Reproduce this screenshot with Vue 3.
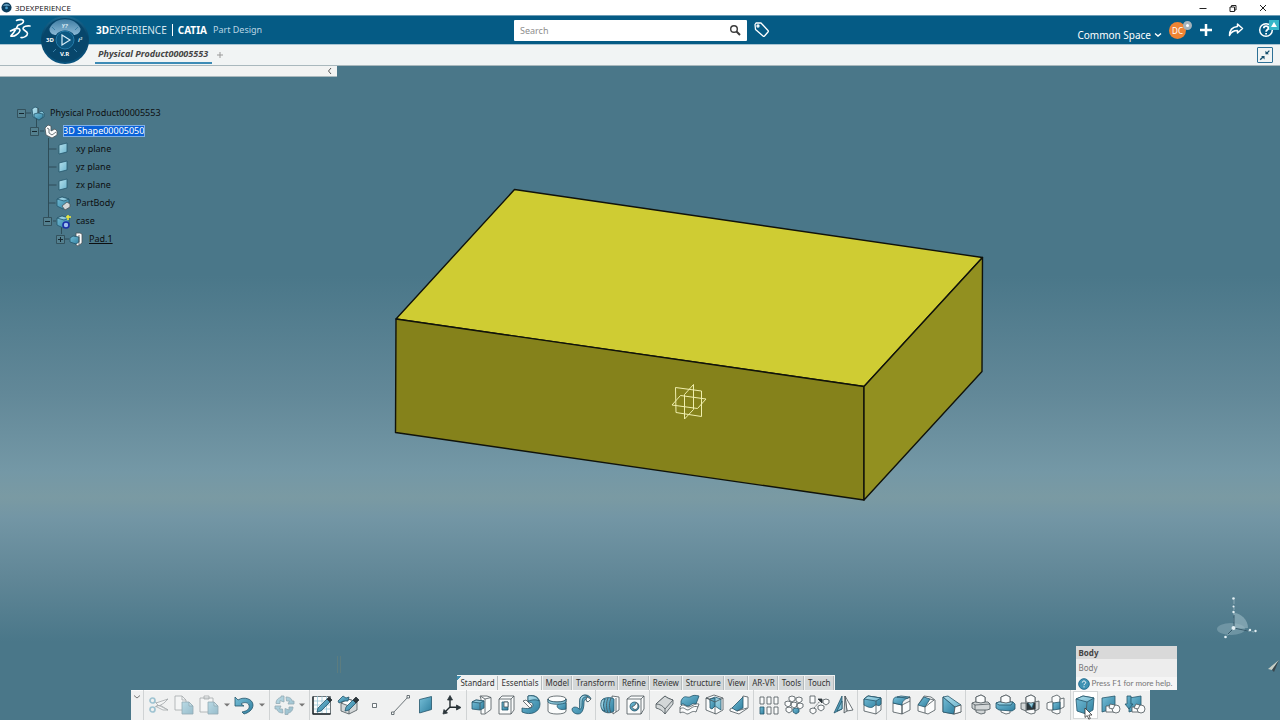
<script setup>
import { ref } from 'vue'

const query = ref('')

// Shape lists for the action bar icons: [style classes, path data]
const icons = {
  cut: [['n grey', 'M21 8L8 16M21 19L8 11'], ['ring', 'M8 9.500a2.500 2.500 0 1 1-5 0a2.500 2.500 0 1 1 5 0M8 18.500a2.500 2.500 0 1 1-5 0a2.500 2.500 0 1 1 5 0'], ['w', 'M9 12l12-4-4 4-5 3zM9 15.500l3-1 9 4.500h-5z']],
  copy: [['w', 'M3 5h7l4 4v10H3z'], ['n', 'M10 5v4h4'], ['b', 'M10 11h7l4 4v8H10z'], ['l', 'M17 11v4h4z']],
  paste: [['w', 'M3 7h13v14H3zM7 5h5v3H7z'], ['b', 'M11 11h6l4 4v8H11z'], ['l', 'M17 11v4h4z']],
  undo: [['b', 'M3 6l3 3c6-4 15-1 15 5c0 5-5 8-9 9l-2-2c5-1 8-3 7-7c-1-3-6-3-8-1l3 2H3z']],
  update: [['b', 'M4 12.500c0-4 3-6 5-6V5h3v6l-4-1.500v3zM14 6c4 0 6 2 6 4h2v3h-6l1.500-3h-3zM21 16c0 4-3 6-5 6v1.500h-3v-6l4 1.500v-3zM11 22c-4 0-6-2-6-4H3v-3h6l-1.500 3h3z']],
  sketch: [['w', 'M3 5.500h17.500v17.500H3z'], ['n blue', 'M3 10h17M3 14h17M3 18h17M7.500 5v18M12 5v18M16.500 5v18'], ['n bold', 'M3 5.500v17.500h17.500'], ['b', 'M7 21l1-4 9-9 3 3-9 9z'], ['k', 'M17 8l2-2 3 3-2 2z']],
  sketch3d: [['g', 'M5 12l7-4 9 3v8l-8 4-8-3z'], ['w', 'M5 12l7-4 9 3-8 4z'], ['n', 'M13 15v8'], ['b', 'M2 10l5-5 3 2 3-1-1 4H8l-5 2z'], ['b', 'M9 20l1-4 7-7 3 3-7 7z'], ['k', 'M17 9l3-3 3 3-3 3z']],
  point: [['w', 'M10.500 12.500h4v4h-4z']],
  line: [['n', 'M5 22L20 6'], ['w', 'M3.500 21h2.500v2.500H3.500zM19 4.500h2.500v2.500H19z']],
  plane: [['b', 'M5.500 8.500l12-3v13l-12 3.500z']],
  axis: [['n bold', 'M10 16V8M10 16l9 .5M10 16l-5 5'], ['k', 'M10 4.500l2.500 4.500h-5zM21 16.500l-4.500-2.500v5zM3 23l1-4.500 3.500 3.500z']],
  pad: [['w', 'M11 5h7l4 1.500v12l-6 4.500h-4V8z'], ['n', 'M16 8v14.500M16 8l6-1.500M12 5.500l4 2.500'], ['b', 'M3 11l4-2 8 1v7l-4 2-8-1z'], ['l', 'M3 11l4-2 8 1-4 2z'], ['n', 'M11 12v7']],
  pocket: [['w', 'M5 8l3-3h12v14l-3 4H5z'], ['n', 'M5 8h12v15M17 8l3-3'], ['b', 'M8 11h6v8H8z'], ['w', 'M10 11h4v5h-4z']],
  shaft: [['b', 'M9 5c7-2 12 2 12 8c0 8-9 12-18 8l0-4c5 1 11 1 11-3c0-2-2-3-5-3z'], ['l', 'M9 5c6-1 10 1 11 5c-3-2-7-1-11 0z'], ['w', 'M4 10l3-1 6 6-2 2z']],
  groove: [['w', 'M4 8v12c0 4 18 4 18 0V8z'], ['w', 'M4 8c0-4 18-4 18 0s-18 4-18 0'], ['b', 'M13 15c1-3 5-4 9-3v6c-3 1-8 1-9-3z'], ['l', 'M4 8c0 4 18 4 18 0v3c-2 3-16 3-18 0z']],
  rib: [['b', 'M3 18c1-3 6-2 7 0c2-3-1-11 3-13c3-2 8-1 9 3l-4 3c0-3-3-3-3 0c0 5-1 12-6 12c-3 0-6-2-6-5z'], ['l', 'M10 18c2-3-1-11 3-13c3-2 6 0 6 1c-6-1-6 3-6 7c0 5-2 6-3 5z'], ['w', 'M18 6l4 2-3 3-2-2z']],
  multi: [['w', 'M14 5l7 1v13l-6 4z'], ['n', 'M18 7v14'], ['b', 'M4 9c3-3 9-3 12-1v12c-4 3-9 2-12-1z'], ['n', 'M7 8c-2 4-2 9 0 13M10 7c-2 5-2 10 0 15M13 7c-2 5-2 10 0 15'], ['l', 'M4 9c1-1 2-1 3-1c-2 4-2 8 0 12c-5-1-5-8-3-11z']],
  hole: [['w', 'M4 8l4-3h13v13l-3 5H4z'], ['n', 'M4 8h14v15M18 8l3-3'], ['b', 'M16 15.500a4.500 4.500 0 1 1-9 0a4.500 4.500 0 1 1 9 0'], ['w', 'M13 11.500c2 1 3 5 0 7c-3 0-4-2-4-3c2 0 4-2 4-4z']],
  thick: [['g', 'M4 13l9-8c2 2 5 3 8 4v4l-8 10c-2-3-5-5-9-6z'], ['g', 'M4 13l9-8c2 2 5 3 8 4l-8 9c-2-3-5-5-9-5z'], ['n', 'M13 18v5']],
  surf: [['w', 'M3 16c3-4 5-1 8 0c4 0 6-4 11-3l-3 8c-4-2-6 2-9 2c-2-1-4-3-7-1z'], ['b', 'M4 10c3-7 6-3 9-4c3-2 5-2 9-1l-3 8c-4-2-5 2-8 2c-3 0-5-4-7-1z'], ['n', 'M3 18c4-3 5 1 8 1c3-1 5-5 10-3']],
  shell: [['w', 'M4 7l8-3 9 3v12l-7 4-10-4z'], ['l', 'M8 8l5-2 6 2v11l-6-4-4 2z'], ['b', 'M8 8l5-1v8l-3 3-2-1z'], ['n', 'M4 7l9 4 8-4M13 16v7M4 7l4 1']],
  stiff: [['w', 'M3 18l11-5 2-8 5 1v11l-9 6-9-3z'], ['b', 'M5 17L16 6v11l-6 3z'], ['n', 'M10 20l10-3']],
  pattern: [['w', 'M4 6h4v7H4zM11 6h4v7h-4zM18 6h4v7h-4zM11 16h4v7h-4zM18 16h4v7h-4z'], ['b', 'M4 16h4v7H4z']],
  circ: [['w', 'M8 6l3-1 3 1v3l-3 2-3-2zM15 7l3-1 3 1v3l-3 2-3-2zM4 11l3-1 3 1v3l-3 2-3-2zM16 13l3-1 3 1v3l-3 2-3-2zM10 12l3-1 3 1v3l-3 2-3-2zM5 17l3-1 3 1v3l-3 2-3-2z'], ['b', 'M12 18l3-1 3 1v3l-3 2-3-2z']],
  userpat: [['w', 'M4 5h5v7H4zM4 18l3-1 3 1v3l-3 2-3-2zM17 9l3-1 3 1v3l-3 2-3-2zM12 15l3-1 3 1v3l-3 2-3-2z'], ['n dash', 'M8 17l7-8'], ['k', 'M12 8h4v4z']],
  mirror: [['b', 'M3 22l8-17v13z'], ['l', 'M6 20l5-10v8z'], ['w', 'M14 5l8 14-6 1z'], ['g', 'M14 5l2 15-3 2z']],
  split: [['w', 'M4 8l4-3 13 2v12l-5 4-12-3z'], ['b', 'M4 8l4-3 13 2v6c-3 4-4-1-7 2s-6 1-10-1z'], ['l', 'M4 8l4-3 13 2-5 3z'], ['n', 'M16 10v13']],
  fillet: [['w', 'M4 12l9 2v9l-9-2zM13 14l8-4v9l-8 4z'], ['b', 'M4 12c0-4 1-6 4-6l11 1c-3 1-6 3-6 7z'], ['l', 'M8 6l4-1 9 1-2 1z'], ['n', 'M19 7l2-1v4']],
  chamfer: [['w', 'M4 14l6-9 7 1 4 3v10l-7 4-10-3z'], ['b', 'M4 14l6-8 6 2-5 8z'], ['n', 'M11 16v6M16 8l4 1M11 16l9-7']],
  draft: [['w', 'M4 6l15 7 3 8-7 2-11-2z'], ['b', 'M4 6l12 10-1 7-11-2z'], ['l', 'M4 6l5-1 13 9-6 2z'], ['w', 'M16 16l6-2v7l-7 2z']],
  assemble: [['g', 'M8 6l5-2 4 2v16l-4 1-5-2z'], ['g', 'M4 12l3-1h13l2 2v5l-3 1H7l-3-2z'], ['w', 'M8 6l5-2 4 2v5l-4 1-5-1z'], ['n', 'M4 12l3 2 15-1M7 14v5']],
  add: [['w', 'M8 6l5-2 4 2v16l-4 1-5-2z'], ['b', 'M3 12l3-1h14l2 2v5l-3 2-13-1-3-2z'], ['l', 'M3 12l3-1h14l-2 3H6z'], ['w', 'M8 6l5-2 4 2v5l-4 1-5-1z']],
  remove: [['w', 'M8 6l5-2 4 2v16l-4 1-5-2z'], ['g', 'M3 12h5v8l-5-2zM17 11l4-1v8l-4 2z'], ['k', 'M9 12h8v6l-8 1z'], ['l', 'M10 12l6-1-2 6z'], ['w', 'M8 6l5-2 4 2v5l-4 1-5-1z']],
  inter: [['w', 'M9 6l5-2 3 2v16l-3 1-5-2z'], ['w', 'M4 12l3-1h3v8H6l-2-1zM17 8l4-1v9l-4 2z'], ['b', 'M10 12l7-1v7l-7 1z']],
  body: [['b', 'M3 8l7-3 11 2-1 12-7 4-9-3z'], ['l', 'M3 8l7-3 11 2-7 4z'], ['n', 'M14 11l-1 12']],
  geoset: [['b', 'M4 7l13-2v12L4 21z'], ['w', 'M8 15h8v6H8z'], ['w', 'M22 18a4 4 0 1 1-8 0a4 4 0 1 1 8 0'], ['w', 'M12 13l5 1-2 4-4-1z']],
  ordered: [['b', 'M6 7l12-2v12L6 21z'], ['b', 'M4 5h4v8h2l-4 5-4-5h2z'], ['w', 'M9 16h7v5H9z'], ['w', 'M22 18a4 4 0 1 1-8 0a4 4 0 1 1 8 0'], ['w', 'M13 13l4 1-2 4-4-1z']],
}

const edit = [
  { icon: 'cut', label: 'Cut', off: true },
  { icon: 'copy', label: 'Copy', off: true },
  { icon: 'paste', label: 'Paste', off: true, menu: true },
  { icon: 'undo', label: 'Undo', menu: true },
]
const groups = [
  { cls: 'first', tools: edit },
  { cls: '', tools: [{ icon: 'update', label: 'Update', off: true, menu: true }] },
  { cls: 'wide', tools: ['sketch', 'sketch3d', 'point', 'line', 'plane', 'axis'].map(tool) },
  { cls: 'snug', tools: ['pad', 'pocket', 'shaft', 'groove', 'rib'].map(tool) },
  { cls: 'snug', tools: ['multi', 'hole'].map(tool) },
  { cls: 'snug', tools: ['thick', 'surf', 'shell', 'stiff'].map(tool) },
  { cls: 'snug', tools: ['pattern', 'circ', 'userpat', 'mirror'].map(tool) },
  { cls: 'snug', tools: ['split'].map(tool) },
  { cls: 'snug', tools: ['fillet', 'chamfer', 'draft'].map(tool) },
  { cls: '', tools: ['assemble', 'add', 'remove', 'inter'].map(tool) },
  { cls: '', tools: ['body', 'geoset', 'ordered'].map(tool) },
]
function tool(name) {
  return { icon: name, label: name, tip: name === 'body' }
}

const sections = ['Standard', 'Essentials', 'Model', 'Transform', 'Refine', 'Review', 'Structure', 'View', 'AR-VR', 'Tools', 'Touch']

const tree = [
  { text: 'Physical Product00005553', level: 0, box: '-', icon: 'product' },
  { text: '3D Shape00005050', level: 1, box: '-', icon: 'shape', selected: true },
  { text: 'xy plane', level: 2, icon: 'plane' },
  { text: 'yz plane', level: 2, icon: 'plane' },
  { text: 'zx plane', level: 2, icon: 'plane' },
  { text: 'PartBody', level: 2, icon: 'part' },
  { text: 'case', level: 2, box: '-', icon: 'case' },
  { text: 'Pad.1', level: 3, box: '+', icon: 'pad', underlined: true },
]
const treeIcons = {
  product: [['l', 'M2 3l3-2 3 1v5l4-2 2 2v4l-5 3-6-3z'], ['b', 'M4 8l4-1 5 1v3l-4 3-5-3z'], ['n', 'M8 7V2']],
  shape: [['w', 'M2 4l3-3 3 1v5l4-2 2 2v4l-5 3-6-3z'], ['n', 'M4 4l2 1v4l3 2 4-3']],
  plane: [['l', 'M3 3l8-2v9l-8 2z']],
  part: [['b', 'M1 3l5-2 7 2v7l-6 3-6-3z'], ['l', 'M1 3l5-2 7 2-5 2z'], ['g', 'M6 10l5-4 3 2v3l-5 3z']],
  case: [['b', 'M1 4l5-2 7 2v7l-6 3-6-3z'], ['l', 'M1 4l5-2 7 2-5 2z'], ['gear', 'M13 11a3 3 0 1 1-6 0a3 3 0 1 1 6 0'], ['star', 'M12 1v5M10 3h5']],
  pad: [['w', 'M7 1h4l2 1v9l-4 3-2-1V4z'], ['b', 'M1 6l3-2 6 1v5l-3 2-6-2z'], ['n', 'M10 3v10']],
}
</script>

<template>
  <div class="app">
    <svg class="defs" width="0" height="0" aria-hidden="true">
      <defs>
        <linearGradient id="steel" x1="0" y1="0" x2="1" y2="1"><stop offset="0" stop-color="#77bfd8" /><stop offset="1" stop-color="#2f7f9f" /></linearGradient>
        <linearGradient id="ice" x1="0" y1="0" x2="1" y2="1"><stop offset="0" stop-color="#b4e0ec" /><stop offset="1" stop-color="#6eb5ce" /></linearGradient>
        <linearGradient id="ring" x1="0" y1="0" x2="0" y2="1"><stop offset="0" stop-color="#1a6990" /><stop offset="0.450" stop-color="#064468" /><stop offset="1" stop-color="#0a5580" /></linearGradient>
        <linearGradient id="gloss" x1="0" y1="0" x2="0" y2="1"><stop offset="0" stop-color="#3f7da3" /><stop offset="1" stop-color="#8bb9d6" /></linearGradient>
      </defs>
    </svg>
    <div class="titlebar">
      <svg class="app-icon" viewBox="0 0 12 12"><circle cx="6" cy="6" r="5.500" fill="#0c3d5c" /><path d="M2 4a4.500 3.500 0 0 1 8 0z" fill="#6aa5c8" /><circle cx="6" cy="6.500" r="1.500" fill="#4aa0d0" /></svg>
      <span class="app-name">3DEXPERIENCE</span>
      <button type="button" aria-label="Minimize"><svg viewBox="0 0 10 10"><path d="M1.500 5.500h7" /></svg></button>
      <button type="button" aria-label="Restore"><svg viewBox="0 0 10 10"><path d="M2 4h4.500v4.500H2zM3.500 4V2.500H8V7H6.500" /></svg></button>
      <button type="button" aria-label="Close"><svg viewBox="0 0 10 10"><path d="M2 2l6 6M8 2L2 8" /></svg></button>
    </div>

    <header class="header">
      <div class="brand">
        <svg class="ds-logo" viewBox="0 0 24 24"><path d="M8.500 2.500c3-1.500 7-1 7 .8c0 2-3 3.200-5.500 3.900M10 7.200c-2 4-4 8-7 10.500c-1 1 3 .8 5-.7c3-2 5-4.500 3.500-6c-1.500-1.300-5.500 0-9 2M22 8c-3-.5-7 .5-7 2.500c0 2 4.500 2.500 4.500 5c0 2.500-4 4.500-6.500 4" /></svg>
        <p class="brand-text"><b>3D</b>EXPERIENCE <i class="bar"></i> <b>CATIA</b> <small>Part Design</small></p>
      </div>
      <div class="search">
        <form class="search-box" @submit.prevent>
          <input v-model="query" type="text" placeholder="Search" aria-label="Search" />
          <button type="submit" aria-label="Run search"><svg viewBox="0 0 12 12"><circle cx="5" cy="5" r="3.300" /><path d="M7.500 7.500L11 11" stroke-width="2" /></svg></button>
        </form>
      </div>
      <div class="actions">
        <button class="tag" type="button" aria-label="Tags"><svg viewBox="0 0 16 16"><path d="M1 2.500L2 1h5l7 7.500c.5.500.5 1 0 1.500l-3.500 4c-.5.500-1 .5-1.500 0L1.500 7.500z" /><circle cx="4" cy="4" r="1" /></svg></button>
        <button class="space" type="button">Common Space <svg viewBox="0 0 8 6"><path d="M1 1.500l3 2.500 3-2.500" /></svg></button>
        <button class="avatar" type="button">DC<span class="status"></span></button>
        <button class="act" type="button" aria-label="Add"><svg viewBox="0 0 16 16"><path d="M8 2v12M2 8h12" stroke-width="2.500" /></svg></button>
        <button class="act" type="button" aria-label="Share"><svg viewBox="0 0 16 16"><path d="M9.500 2l5 4.500-5 4.500V8.500C5.500 8.500 3 10 1.500 13.500C1.500 8 4.500 5 9.500 4.500z" /></svg></button>
        <button class="act" type="button" aria-label="Help"><svg viewBox="0 0 16 16"><circle cx="8" cy="8" r="6.300" /><path d="M5.800 6.200c0-3 4.600-2.600 4.600 0c0 1.600-2.300 1.600-2.300 3.500M8.100 11v1.500" stroke-width="1.800" /></svg><span class="notice"></span></button>
      </div>
      <svg class="compass" viewBox="0 0 50 50">
        <circle cx="25" cy="25" r="24" fill="url(#ring)" />
        <circle cx="25" cy="25" r="22" fill="#07466b" />
        <path d="M9.500 13.500C15 1 35 1 40.500 13.500C41 18 36 20 34 20C31 14 19 14 16 20C13 20 9 18 9.500 13.500z" fill="url(#gloss)" />
        <circle cx="25" cy="25" r="9" fill="#0c5781" stroke="#257caa" />
        <path d="M22 20l8 5-8 5z" fill="none" stroke="#d9edf8" stroke-width="1.200" />
        <path d="M16 34l-3 3M34 34l3 3M15 15l-3-3M35 15l3-3" stroke="#3b81a8" />
        <text x="6" y="27">3D</text><text x="20" y="41">V.R</text><text x="21.500" y="13" class="soft">Y?</text><text x="38" y="27" class="soft">i²</text>
      </svg>
    </header>

    <nav class="docs">
      <a class="doc" href="#product">Physical Product00005553</a>
      <button class="new-doc" type="button" aria-label="New tab"><svg viewBox="0 0 8 8"><path d="M4 1v6M1 4h6" /></svg></button>
      <button class="shrink" type="button" aria-label="Exit full view"><svg viewBox="0 0 16 16"><path d="M2.500 13.500l3.500-3.500M13 3L9.500 6.500" stroke-width="1.500" /><path d="M3.500 9h4v4zM8.500 3v4h4z" fill="#16506e" stroke="none" /></svg></button>
    </nav>

    <main class="viewport">
      <svg class="scene" viewBox="0 66 1280 654" preserveAspectRatio="xMidYMid meet">
        <g stroke="#10120a" stroke-width="1.400" stroke-linejoin="round">
          <path d="M514.500 189.500L982.500 257.500L864 386.500L396 319z" fill="#cfcc33" />
          <path d="M396 319L864 386.500V500L395.500 432.500z" fill="#85821b" />
          <path d="M982.500 257.500L864 386.500V500L982 371.500z" fill="#929020" />
        </g>
        <path d="M675.500 387.500l26 3.500v25.500l-25.500-4zM672 405l8.500-9.500 25.500 3.500-8.500 9.500zM693.500 384.500v25l-9 9.500v-24.500z" fill="none" stroke="#f0efae" stroke-width="1" />
        <path d="M337.500 656v17M340.500 656v17" stroke="#5c7c7f" stroke-width="1" />
      </svg>

      <div class="panel"><button type="button" aria-label="Collapse tree"><svg viewBox="0 0 6 8"><path d="M4 1L1.500 4 4 7" /></svg></button></div>

      <div class="tree">
        <svg class="links" viewBox="0 0 120 144"><path d="M26 9h5M36.500 15v12M40 27h4M48.500 34v82M48.500 45h8M48.500 63h8M48.500 81h8M48.500 99h7M53 117h3M61.500 122v8M65 135h4" /></svg>
        <div v-for="node in tree" :key="node.text" class="node" :class="'level' + node.level">
          <button v-if="node.box" class="box" type="button" :aria-label="'Toggle ' + node.text"><svg viewBox="0 0 9 9"><path d="M.5 .5h8v8h-8z" /><path :d="node.box === '+' ? 'M2 4.500h5M4.500 2v5' : 'M2 4.500h5'" stroke="#16262e" /></svg></button>
          <span v-else class="box"></span>
          <svg class="node-icon glyph" viewBox="0 0 15 15"><path v-for="(s, i) in treeIcons[node.icon]" :key="i" :class="s[0]" :d="s[1]" /></svg>
          <span class="node-text" :class="{ selected: node.selected, underlined: node.underlined }">{{ node.text }}</span>
        </div>
      </div>

      <svg class="robot" viewBox="0 0 50 50">
        <ellipse cx="21" cy="33" rx="14" ry="6" fill="#8fb0bc" opacity="0.500" />
        <path d="M24 17c7 0 14 7 14 15l-14 1z" fill="#9dbac4" opacity="0.600" />
        <path d="M24 32V3M24 32l20 4M24 32l-8 9" fill="none" stroke="#8aa9b5" stroke-width="1" stroke-dasharray="4 2" />
        <path d="M24 32V19M24 32l14 3M24 32l-6 6" stroke="#35596a" stroke-width="1" />
        <g fill="#e4f0f4"><circle cx="23.500" cy="32" r="2" /><circle cx="23.500" cy="2.500" r="1.300" /><circle cx="23.500" cy="10.500" r="1" /><circle cx="23.500" cy="16" r="1.200" /><circle cx="40" cy="34" r="1.200" /><circle cx="45.500" cy="35" r="1.200" /><circle cx="15.500" cy="41" r="1.300" /></g>
      </svg>
      <svg class="dart" viewBox="0 0 12 12"><path d="M12 0L1 9l4 1z" fill="#c9cfc6" /><path d="M12 0L5 10l2 2z" fill="#39464c" /></svg>

      <div class="dock">
        <div class="sections">
          <button v-for="(name, i) in sections" :key="name" type="button" :class="{ lit: i < 2 }">{{ name }}</button>
        </div>
        <div class="toolbar">
          <button class="fold" type="button" aria-label="Collapse action bar"><svg viewBox="0 0 8 6"><path d="M1 1.500l3 2.500 3-2.500" /></svg></button>
          <div v-for="(group, g) in groups" :key="g" class="group" :class="group.cls">
            <template v-for="t in group.tools" :key="t.icon">
              <button class="tool" :class="{ off: t.off, hot: t.tip }" type="button" :aria-label="t.label">
                <svg class="glyph" viewBox="0 0 25 28"><path v-for="(s, i) in icons[t.icon]" :key="i" :class="s[0]" :d="s[1]" /></svg>
                <svg v-if="t.tip" class="cursor" viewBox="0 0 9 13"><path d="M1 1v9.500l2.200-2 1.600 3.700 1.500-.7-1.500-3.500H8z" /></svg>
              </button>
              <button v-if="t.menu" class="menu" type="button" :aria-label="t.label + ' options'"><svg viewBox="0 0 6 4"><path d="M0 .5h6L3 3.500z" /></svg></button>
            </template>
          </div>
          <div class="tooltip" role="tooltip">
            <strong>Body</strong>
            <span class="desc">Body</span>
            <span class="help"><svg viewBox="0 0 12 12"><circle cx="6" cy="6" r="5.300" fill="#3f93b4" stroke="#226f92" /><path d="M4.300 4.600c0-2.200 3.400-2 3.400 0c0 1.200-1.700 1.200-1.700 2.600M6 8.300v1.100" fill="none" stroke="#fff" /></svg>Press F1 for more help.</span>
          </div>
        </div>
      </div>
    </main>
  </div>
</template>

<style>
html, body { margin: 0; background: #4a7789; }
</style>

<style scoped>
.app { display: flex; flex-direction: column; height: 100vh; min-height: 480px; overflow: hidden; font-family: "Noto Sans", "Open Sans", sans-serif; color: #3c3c3c; }
button { margin: 0; padding: 0; border: 0; background: none; font: inherit; color: inherit; display: flex; align-items: center; justify-content: center; cursor: pointer; }
svg { display: block; flex: none; }
p { margin: 0; }
.defs { position: absolute; }

.titlebar { flex: none; display: flex; align-items: center; height: 15px; padding: 0 2px 0 1px; background: #fff; }
.app-icon { width: 11px; height: 11px; margin-right: 3px; }
.app-name { flex: 1; font: 8px/15px "Open Sans", sans-serif; color: #111; }
.titlebar button { width: 30px; height: 15px; }
.titlebar button svg { width: 10px; height: 10px; fill: none; stroke: #222; stroke-width: 1; }

.header { position: relative; z-index: 2; flex: none; display: grid; grid-template-columns: 514fr 233fr 533fr; height: 28px; border-top: 1px solid #6d9db6; background: #055b85; color: #fff; }
.brand { display: flex; align-items: center; }
.ds-logo { width: 24px; height: 24px; margin: 0 64px 0 8px; fill: none; stroke: #fff; stroke-width: 1.6; stroke-linecap: round; }
.brand-text { display: flex; align-items: center; font-size: 10px; line-height: 16px; color: #d5e6ef; white-space: nowrap; }
.brand-text b { color: #fff; }
.brand-text small { margin-left: 6px; font-size: 9px; color: #b9d5e3; }
.bar { width: 1px; height: 12px; margin: 0 5px; background: #fff; }
.search { display: flex; align-items: center; }
.search-box { flex: 1; display: flex; height: 21px; background: #fff; border-radius: 1px; }
.search-box input { flex: 1; min-width: 0; padding: 0 6px; border: 0; outline: 0; background: none; font: 9px/21px "Noto Sans", sans-serif; color: #333; }
.search-box input::placeholder { color: #8d8d8d; opacity: 1; }
.search-box button { width: 25px; }
.search-box svg { width: 12px; height: 12px; fill: none; stroke: #3a3a3a; stroke-width: 1.4; }
.actions { display: flex; align-items: center; margin-right: -1px; }
.tag { width: 30px; margin-right: auto; }
.tag svg, .act svg { width: 16px; height: 16px; fill: none; stroke: #fff; stroke-width: 1.3; stroke-linejoin: round; }
.space { align-self: flex-end; height: 18px; font-size: 10px; gap: 3px; margin-right: 7px; white-space: nowrap; }
.space svg { width: 8px; height: 6px; fill: none; stroke: #fff; stroke-width: 1.4; }
.avatar { position: relative; width: 17px; height: 17px; margin-right: 5px; border-radius: 50%; background: #ee8434; font-size: 8px; color: #fff; }
.status { position: absolute; top: -1px; right: -6px; width: 3px; height: 3px; border: 3px solid #a5b3bb; border-radius: 50%; background: #fff; }
.act { position: relative; width: 30px; }
.act svg { stroke-width: 1.5; }
.notice { position: absolute; top: -2px; right: 2px; width: 10px; height: 10px; background: #35b6c8; }
.notice::after { content: ""; position: absolute; left: 2px; top: 2px; border: 3px solid transparent; border-top: 0; border-bottom: 5px solid #fff; }
.compass { position: absolute; left: 40px; top: -1px; width: 50px; height: 50px; }
.compass text { font: bold 6px "Noto Sans", sans-serif; fill: #fff; }
.compass .soft { fill: #d5e6ef; font-style: italic; }

.docs { flex: none; display: flex; align-items: center; height: 20px; padding: 0 7px 0 95px; border-top: 1px solid #a9c4d2; border-bottom: 1px solid #a9b8bd; background: #f1f4f4; }
.doc { align-self: stretch; box-sizing: border-box; height: 19px; padding: 0 4px 0 3px; border-bottom: 2px solid #3d8bb5; font: italic bold 9px/18px "Noto Sans", sans-serif; color: #454545; text-decoration: none; }
.new-doc { width: 16px; height: 16px; }
.new-doc svg { width: 8px; height: 8px; fill: none; stroke: #9a9a9a; }
.shrink { margin-left: auto; width: 16px; height: 16px; box-sizing: border-box; border: 1px solid #2d7095; border-radius: 1px; }
.shrink svg { width: 14px; height: 14px; fill: none; stroke: #16506e; }

.viewport { position: relative; flex: 1; min-height: 0; display: flex; flex-direction: column; align-items: flex-start; background: linear-gradient(#4a7789 0%, #4a7789 32%, #628898 50%, #7498a6 62%, #7a9aa3 66%, #7396a5 69%, #618797 78%, #4a7789 88%, #4a7789 100%); }
.scene { position: absolute; inset: 0; width: 100%; height: 100%; }
.panel { position: relative; width: 337px; height: 10px; display: flex; justify-content: flex-end; background: #f2f3f2; border-bottom: 1px solid #aab9be; }
.panel button { width: 14px; }
.panel svg { width: 6px; height: 8px; fill: none; stroke: #555; }

.tree { position: relative; margin-top: 27px; }
.links { position: absolute; left: 0; top: 0; width: 120px; height: 144px; fill: none; stroke: #2e4d58; stroke-width: 1; }
.node { position: relative; display: flex; align-items: center; height: 18px; padding-left: 17px; }
.level1 { padding-left: 30px; }
.level2 { padding-left: 43px; }
.level3 { padding-left: 56px; }
.box { width: 9px; height: 9px; }
.box svg { width: 9px; height: 9px; fill: #54808f; stroke: #33515c; stroke-width: 1; }
.node-icon { width: 15px; height: 15px; margin: 0 5px 0 4px; }
.node-text { font-size: 9px; line-height: 12px; color: #0d0f10; white-space: nowrap; padding-right: 1px; }
.selected { background: #0a62d8; color: #fff; outline: 1px solid #7fb0e6; outline-offset: -1px; }
.underlined { text-decoration: underline; }

.glyph path { stroke: #4a5459; stroke-width: .8; stroke-linejoin: round; }
.glyph .n { fill: none; }
.glyph .b { fill: url(#steel); stroke: #24566b; }
.glyph .l { fill: url(#ice); stroke: #24566b; }
.glyph .w { fill: #fbfcfc; }
.glyph .g { fill: #d3d7d8; }
.glyph .k { fill: #2b353a; stroke: #2b353a; }
.glyph .blue { stroke: #93c4d6; stroke-width: .7; }
.glyph .bold { stroke-width: 1.4; stroke: #20282c; }
.glyph .ring { fill: none; stroke: #3f8fae; stroke-width: 1.7; }
.glyph .dash { stroke-dasharray: 2 1; }
.glyph .gear { fill: #9fc0ee; stroke: #1a2fa8; stroke-width: 1.6; }
.glyph .star { fill: none; stroke: #f3ee3a; stroke-width: 1.5; }

.robot { position: absolute; right: 20px; bottom: 74px; width: 50px; height: 50px; }
.dart { position: absolute; right: 1px; bottom: 48px; width: 12px; height: 12px; }

.dock { margin: auto auto 0; position: relative; display: flex; flex-direction: column; align-items: center; }
.sections { display: flex; margin-left: 12px; }
.sections button { height: 15px; padding: 0 3px; border: 1px solid #f0f2f2; border-left: 0; border-bottom: 0; background: #d4d8d9; font-size: 8px; line-height: 14px; color: #333; box-shadow: inset -1px 0 #b5bbbd; }
.sections .lit { background: #eff1f1; }
.sections button:first-child { background: linear-gradient(135deg, #3f8fb0 3px, #eff1f1 3px); }
.toolbar { position: relative; display: flex; height: 30px; background: #f0f1f1; box-shadow: inset 0 1px #fbfbfb; }
.fold { width: 12px; height: 14px; }
.fold svg { width: 8px; height: 6px; fill: none; stroke: #777; }
.group { display: flex; align-items: center; padding: 0 2px; border-left: 1px solid #d0d3d4; }
.group.snug { padding: 0 1px 0 2px; }
.group.first { padding-left: 3px; }
.group.wide { padding: 0; }
.tool { position: relative; width: 25px; height: 28px; }
.wide .tool { width: 26px; }
.tool .glyph { width: 25px; height: 28px; }
.off .glyph { opacity: .45; }
.hot { background: #fff; box-shadow: inset 0 0 0 1px #d5d8d9; }
.menu { width: 10px; height: 28px; }
.menu svg { width: 6px; height: 4px; fill: #777; }
.cursor { position: absolute; left: 11px; top: 16px; width: 9px; height: 13px; fill: #fff; stroke: #333; stroke-width: .8; }
.tooltip { position: absolute; right: -27px; bottom: 30px; width: 101px; display: flex; flex-direction: column; background: #ededed; font-size: 8px; line-height: 15px; color: #777; white-space: nowrap; }
.tooltip strong { height: 13px; padding: 0 3px; line-height: 13px; background: #d9d9d9; color: #444; }
.tooltip .desc { height: 18px; padding: 0 3px; line-height: 18px; }
.tooltip .help { height: 13px; display: flex; align-items: center; gap: 2px; padding: 0 2px; background: #f5f5f5; font-family: Lato, "Noto Sans", sans-serif; }
.help svg { width: 12px; height: 12px; }
</style>
